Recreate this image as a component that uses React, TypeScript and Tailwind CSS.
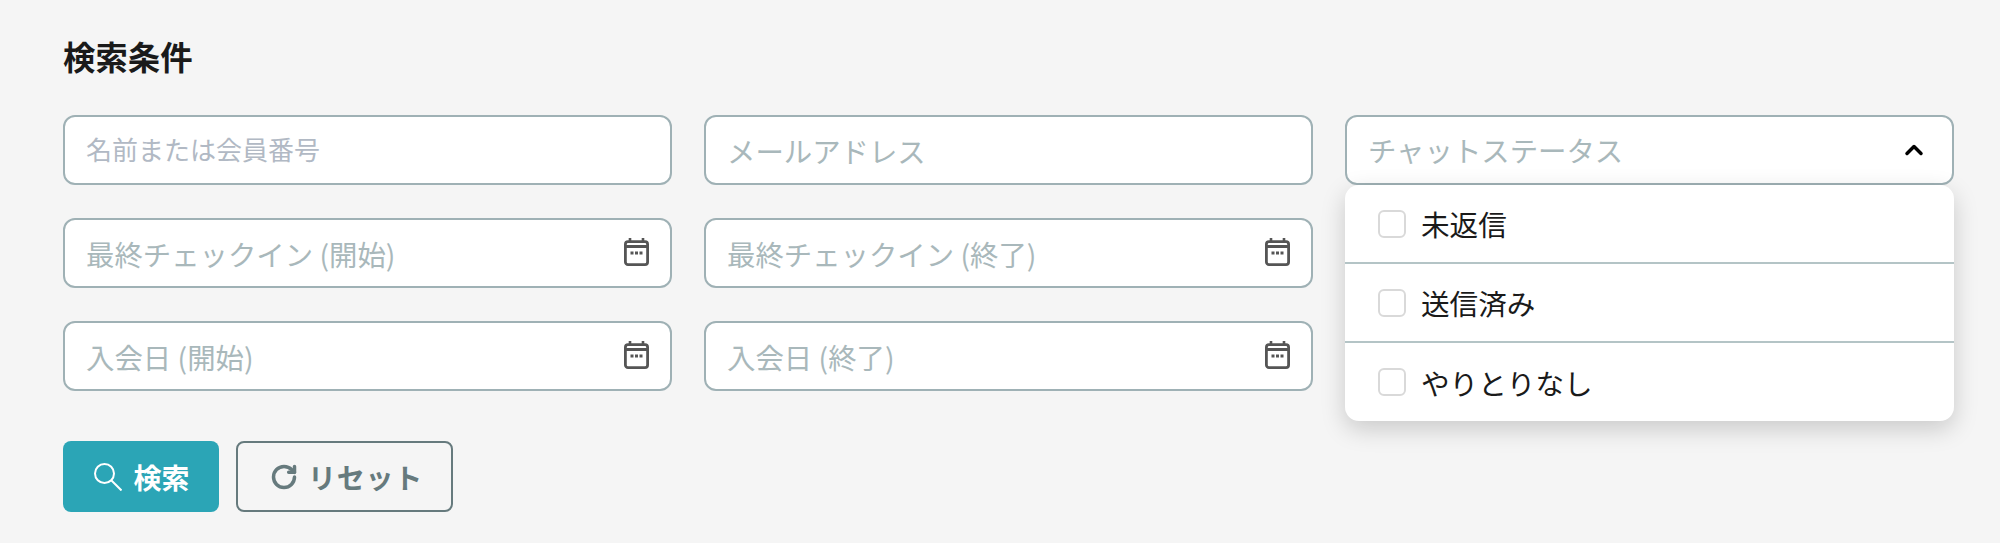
import { ChevronUp, RotateCw } from "lucide-react"

const inputBase =
  "h-[70px] w-full rounded-[12px] border-2 border-[#9fb1b5] bg-white px-[21px] text-[#1a1a1a] outline-none"
const fieldClass = `${inputBase} text-[28.4px] placeholder:text-[#a9b8bb]`

function CalendarIcon() {
  return (
    <svg viewBox="0 0 25 28" className="h-[28px] w-[25px]" fill="none">
      <path d="M6 0v5M19 0v5" stroke="#555" strokeWidth="2.6" />
      <rect x="1.4" y="3.6" width="22.2" height="23" rx="2.6" stroke="#555" strokeWidth="2.8" />
      <path d="M1.4 8.5h22.2" stroke="#555" strokeWidth="3" />
      <path d="M6.5 13.5h3v3h-3zM11 13.5h3v3h-3zM15.5 13.5h3v3h-3z" fill="#555" />
    </svg>
  )
}

function SearchIcon() {
  return (
    <svg viewBox="0 0 28 28" className="h-[28px] w-[28px]" fill="none" stroke="white" strokeWidth="2">
      <circle cx="10.5" cy="10.5" r="9.5" />
      <path d="M17.5 17.5L27.5 27.5" />
    </svg>
  )
}

function DateField({ placeholder }: { placeholder: string }) {
  return (
    <div className="relative">
      <input type="text" placeholder={placeholder} className={fieldClass} />
      <div className="absolute right-[23px] top-[20px]">
        <CalendarIcon />
      </div>
    </div>
  )
}

function StatusOption({ label, last }: { label: string; last?: boolean }) {
  return (
    <label className={`flex items-center gap-[15px] pl-[33px] ${last ? "h-[78px]" : "h-[79px] border-b-2 border-[#b4c4c6]"}`}>
      <span className="h-[28px] w-[28px] rounded-[6px] border-2 border-[#d9d9d9] bg-white" />
      <span className="pt-[2px] text-[28.6px] text-[#1a1a1a]">{label}</span>
    </label>
  )
}

export default function App() {
  return (
    <div className="h-[543px] bg-[#f5f5f5] pl-[63px] pr-[46px] pt-[32px] font-['Noto_Sans_CJK_JP','Roboto',sans-serif]">
      <h2 className="mb-[35px] h-[48px] text-[32.4px] font-bold leading-[48px] text-[#1a1a1a]">検索条件</h2>

      <div className="grid grid-cols-3 gap-x-[32px] gap-y-[33px]">
        <input type="text" placeholder="名前または会員番号" className={`${inputBase} pb-[3px] text-[26px] placeholder:text-[#b1b9c4]`} />
        <input type="text" placeholder="メールアドレス" className={fieldClass} />

        <div className="relative">
          <div className="flex h-[70px] items-center justify-between rounded-[12px] border-2 border-[#9fb1b5] bg-white px-[21px] text-[28.4px] text-[#a9b8bb]">
            <span>チャットステータス</span>
            <ChevronUp className="mr-[3px] h-[28px] w-[28px] text-black" strokeWidth={3} />
          </div>
          <div className="absolute left-0 right-0 top-[70px] z-10 overflow-hidden rounded-[14px] bg-white shadow-[0_8px_24px_rgba(0,0,0,0.18)]">
            <StatusOption label="未返信" />
            <StatusOption label="送信済み" />
            <StatusOption label="やりとりなし" last />
          </div>
        </div>

        <DateField placeholder="最終チェックイン (開始)" />
        <DateField placeholder="最終チェックイン (終了)" />
        <div />
        <DateField placeholder="入会日 (開始)" />
        <DateField placeholder="入会日 (終了)" />
      </div>

      <div className="mt-[50px] flex gap-[17px]">
        <button className="flex h-[71px] w-[156px] items-center justify-center gap-[11px] rounded-[8px] bg-[#2ba5b6] pl-[2px] text-[28px] font-bold text-white">
          <SearchIcon />
          検索
        </button>
        <button className="flex h-[71px] w-[217px] items-center justify-center gap-[10px] rounded-[8px] border-2 border-[#667a7d] pl-[4px] text-[28px] font-bold tracking-[0.7px] text-[#667a7d]">
          <RotateCw className="h-[28px] w-[28px]" strokeWidth={3} />
          リセット
        </button>
      </div>
    </div>
  )
}
